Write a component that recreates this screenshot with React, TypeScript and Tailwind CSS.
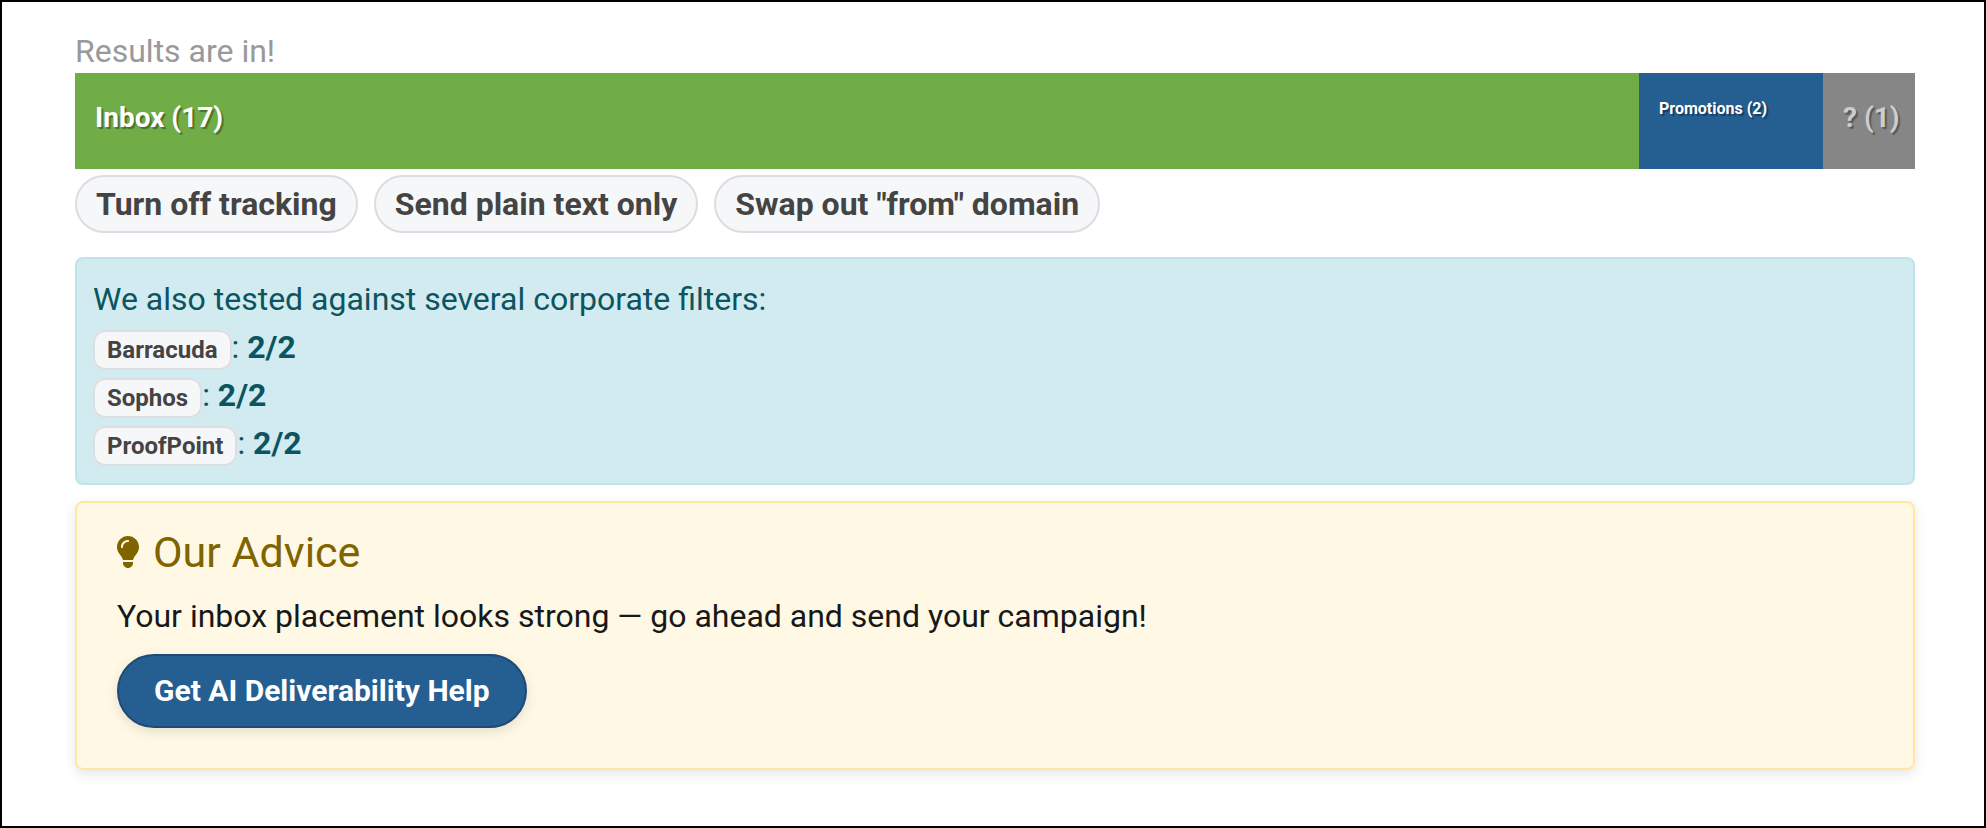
import { FaLightbulb } from "react-icons/fa6";

const suggestions = ["Turn off tracking", "Send plain text only", 'Swap out "from" domain'];

const filters = [
  { name: "Barracuda", score: "2/2" },
  { name: "Sophos", score: "2/2" },
  { name: "ProofPoint", score: "2/2" },
];

const PlacementBar = () => {
  return (
    <div className="grid grid-cols-[17fr_2fr_1fr] h-24 font-bold whitespace-nowrap text-shadow-[2px_2px_1px_rgba(0,0,0,0.35)]">
      <div className="min-w-0 bg-[#70ad47] px-5 py-6 text-[28px] leading-[42px] text-white">Inbox (17)</div>
      <div className="min-w-0 bg-[#255e91] px-5 py-6 text-base leading-6 text-white">Promotions (2)</div>
      <div className="min-w-0 bg-[#868686] px-5 py-6 text-[28px] leading-[42px] text-[#cccccc]">? (1)</div>
    </div>
  );
};

const App = () => {
  return (
    <main className="min-h-screen border-2 border-black bg-white pl-[73px] pr-[69px] pt-[27px] pb-14 font-[Roboto,sans-serif] text-[32px]">
      <p className="leading-[44px] text-[#999999]">Results are in!</p>
      <PlacementBar />

      <div className="mt-1.5 flex flex-wrap gap-4">
        {suggestions.map((item) => (
          <button
            key={item}
            type="button"
            className="rounded-full border-2 border-[#dcdde1] bg-[#f6f7f9] px-[19px] py-2 leading-[38px] font-bold text-[#444444]"
          >
            {item}
          </button>
        ))}
      </div>

      <section className="mt-6 rounded-lg border-2 border-[#bee5eb] bg-[#d1ebf0] p-4 leading-[48px] text-[#0c5460]">
        <p>We also tested against several corporate filters:</p>
        <ul>
          {filters.map((filter) => (
            <li key={filter.name}>
              <span className="rounded-xl border-2 border-[#dddde2] bg-[#f6f7f9] px-3 py-1 text-2xl leading-none font-bold text-[#444444]">
                {filter.name}
              </span>
              : <strong className="font-bold">{filter.score}</strong>
            </li>
          ))}
        </ul>
      </section>

      <section className="mt-4 rounded-lg border-2 border-[#ffe8a1] bg-[#fff8e4] px-10 pt-6 pb-10 shadow-[0_4px_12px_rgba(0,0,0,0.1)]">
        <h2 className="mb-[15px] flex items-center gap-3.5 text-[43px] leading-[50px] text-[#7f6400]">
          <FaLightbulb viewBox="16 0 352 512" className="h-8 w-[22px]" />
          Our Advice
        </h2>
        <p className="leading-[48px] text-[#17181a]">
          Your inbox placement looks strong — go ahead and send your campaign!
        </p>
        <button
          type="button"
          className="mt-3.5 block rounded-full border-2 border-[#1d4b75] bg-[#255e91] px-[35px] py-4 text-[30px] leading-[38px] font-bold text-white shadow-[0_4px_12px_rgba(0,0,0,0.1)]"
        >
          Get AI Deliverability Help
        </button>
      </section>
    </main>
  );
};

export default App;
